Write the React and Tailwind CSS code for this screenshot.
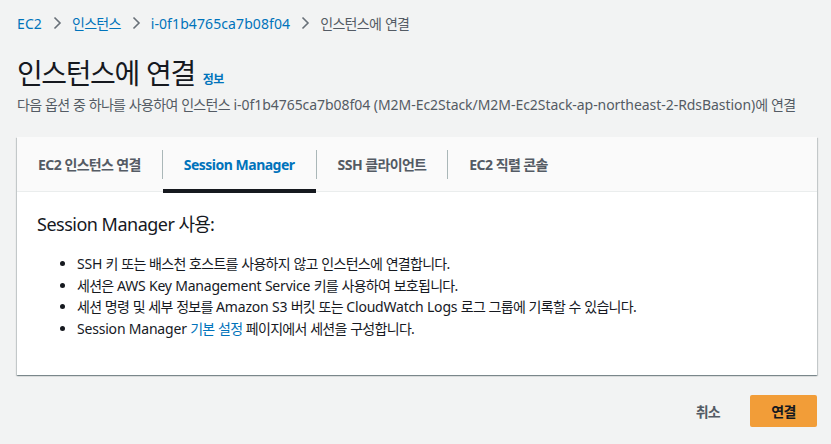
import React from "react";

const font = { fontFamily: '"Noto Sans", "Noto Sans CJK KR", sans-serif' };

const SPLIT = /([\u1100-\u11FF\u3130-\u318F\uAC00-\uD7AF]+)/;
const IS_HANGUL = /^[\u1100-\u11FF\u3130-\u318F\uAC00-\uD7AF]+$/;

function K({ t }) {
  return (
    <>
      {t.split(SPLIT).map((s, i) =>
        IS_HANGUL.test(s) ? (
          <span key={i} className="tracking-[-0.05em]">
            {s}
          </span>
        ) : (
          <React.Fragment key={i}>{s}</React.Fragment>
        )
      )}
    </>
  );
}

function Chevron() {
  return (
    <svg width="16" height="16" viewBox="0 0 16 16" className="mx-[7px]" fill="none">
      <path d="M5.5 2.5 L11 8 L5.5 13.5" stroke="#687078" strokeWidth="1.6" />
    </svg>
  );
}

export default function App() {
  const tabs = ["EC2 인스턴스 연결", "Session Manager", "SSH 클라이언트", "EC2 직렬 콘솔"];
  return (
    <div className="w-[831px] h-[444px] bg-[#f2f3f3] overflow-hidden text-[#16191f]" style={font}>
      <div className="pl-[17px] pr-[14px]">
        <div className="flex items-center h-[20px] mt-[13px] text-[14px] tracking-[0.1px]">
          <span className="text-[#0073bb]">EC2</span>
          <Chevron />
          <span className="text-[#0073bb]"><K t="인스턴스" /></span>
          <Chevron />
          <span className="text-[#0073bb]">i-0f1b4765ca7b08f04</span>
          <Chevron />
          <span className="text-[#545b64]"><K t="인스턴스에 연결" /></span>
        </div>
        <div className="flex items-baseline mt-[22px]">
          <h1 className="text-[28px] leading-[36px] font-normal"><K t="인스턴스에 연결" /></h1>
          <span className="ml-[8px] text-[12px] font-bold text-[#0073bb]"><K t="정보" /></span>
        </div>
        <p className="text-[14px] leading-[20px] text-[#545b64] mt-[4px] tracking-[-0.05px]">
          <K t="다음 옵션 중 하나를 사용하여 인스턴스 i-0f1b4765ca7b08f04 (M2M-Ec2Stack/M2M-Ec2Stack-ap-northeast-2-RdsBastion)에 연결" />
        </p>
        <div className="mt-[22px] bg-white shadow-[0_1px_1px_0_rgba(0,28,36,0.3),1px_1px_1px_0_rgba(0,28,36,0.15),-1px_1px_1px_0_rgba(0,28,36,0.15)] h-[238px]">
          <div className="flex bg-[#fafafa] border-b border-[#eaeded] h-[55px]">
            {tabs.map((t, i) => (
              <div key={t} className="flex items-center">
                {i > 0 && <div className="w-px h-[29px] bg-[#aab7b8]" />}
                <div className="relative h-[55px] flex items-center px-[21px]">
                  <span className={"text-[14px] font-bold tracking-[-0.5px] " + (i === 1 ? "text-[#0073bb]" : "text-[#545b64]")}>
                    <K t={t} />
                  </span>
                  {i === 1 && <div className="absolute left-0 right-0 bottom-[-1px] h-[4px] bg-[#16191f]" />}
                </div>
              </div>
            ))}
          </div>
          <div className="px-[20px] pt-[20px]">
            <h2 className="text-[18px] leading-[24px] font-normal tracking-[-0.5px]"><K t="Session Manager 사용:" /></h2>
            <ul className="mt-[17px] pl-[40px] list-disc text-[14px] leading-[21.7px] tracking-[-0.2px]">
              <li><K t="SSH 키 또는 배스천 호스트를 사용하지 않고 인스턴스에 연결합니다." /></li>
              <li><K t="세션은 AWS Key Management Service 키를 사용하여 보호됩니다." /></li>
              <li><K t="세션 명령 및 세부 정보를 Amazon S3 버킷 또는 CloudWatch Logs 로그 그룹에 기록할 수 있습니다." /></li>
              <li>
                Session Manager <span className="text-[#0073bb]"><K t="기본 설정" /></span> <K t="페이지에서 세션을 구성합니다." />
              </li>
            </ul>
          </div>
        </div>
        <div className="flex justify-end items-center mt-[20px]">
          <span className="text-[14px] font-bold text-[#545b64] mr-[30px]"><K t="취소" /></span>
          <div className="w-[67px] h-[32px] rounded-[2px] bg-[#f29d38] flex items-center justify-center text-[14px] font-bold text-[#16191f]">
            <K t="연결" />
          </div>
        </div>
      </div>
    </div>
  );
}
